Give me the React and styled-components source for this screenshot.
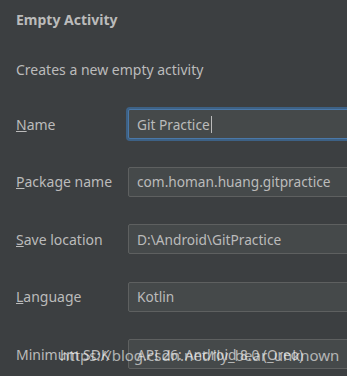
import React from 'react';
import styled, { createGlobalStyle } from 'styled-components';

const GlobalStyle = createGlobalStyle`
  html, body {
    margin: 0;
    padding: 0;
    background: #3c3f41;
    overflow: hidden;
  }
`;

const fields = [
  { label: 'Name', key: 'N', value: 'Git Practice', focused: true },
  { label: 'Package name', key: 'P', value: 'com.homan.huang.gitpractice' },
  { label: 'Save location', key: 'S', value: 'D:\\Android\\GitPractice' },
  { label: 'Language', key: 'L', value: 'Kotlin' },
  { label: 'Minimum SDK', key: '', value: 'API 26: Android 8.0 (Oreo)' },
];

const App = () => {
  return (
    <>
      <GlobalStyle />
      <Panel>
        <Title>Empty Activity</Title>
        <Description>Creates a new empty activity</Description>
        <Form>
          {fields.map((f) => (
            <Row key={f.label}>
              <Label>
                {f.key ? (
                  <>
                    <Mnemonic>{f.key}</Mnemonic>
                    {f.label.slice(1)}
                  </>
                ) : (
                  f.label
                )}
              </Label>
              <Field focused={f.focused}>
                {f.value}
                {f.focused && <Caret />}
              </Field>
            </Row>
          ))}
        </Form>
        <Watermark>https://blog.csdn.net/lly_bear_unknown</Watermark>
      </Panel>
    </>
  );
};

const Panel = styled.div`
  position: relative;
  width: 347px;
  height: 376px;
  padding: 11px 0 0 16px;
  box-sizing: border-box;
  font-family: "Noto Sans", "Open Sans", sans-serif;
  color: #bbbbbb;
`;

const Title = styled.div`
  font-size: 14px;
  font-weight: bold;
  line-height: 18px;
`;

const Description = styled.div`
  font-size: 14px;
  line-height: 18px;
  margin-top: 32px;
`;

const Form = styled.div`
  display: flex;
  flex-direction: column;
  gap: 27.5px;
  margin-top: 30px;
`;

const Row = styled.div`
  display: grid;
  grid-template-columns: 112px 260px;
  align-items: center;
  height: 30px;
`;

const Label = styled.div`
  font-size: 14px;
  white-space: nowrap;
`;

const Mnemonic = styled.span`
  text-decoration: underline;
  text-underline-offset: 1px;
`;

const Field = styled.div`
  display: flex;
  align-items: center;
  height: 30px;
  box-sizing: border-box;
  padding-left: 8px;
  background: #45494a;
  border: 1px solid ${(p) => (p.focused ? '#4a78a8' : '#5e6060')};
  border-radius: 2px;
  box-shadow: ${(p) => (p.focused ? '0 0 0 2px #3d6185' : 'none')};
  font-size: 13.7px;
  color: #bbbbbb;
  white-space: nowrap;
`;

const Caret = styled.span`
  display: inline-block;
  width: 1px;
  height: 17px;
  background: #bbbbbb;
  margin-left: 1px;
`;

const Watermark = styled.div`
  position: absolute;
  left: 60px;
  top: 343px;
  font-family: "Noto Sans", sans-serif;
  font-size: 15px;
  line-height: 24px;
  color: rgba(255, 255, 255, 0.6);
  white-space: nowrap;
`;

export default App;
